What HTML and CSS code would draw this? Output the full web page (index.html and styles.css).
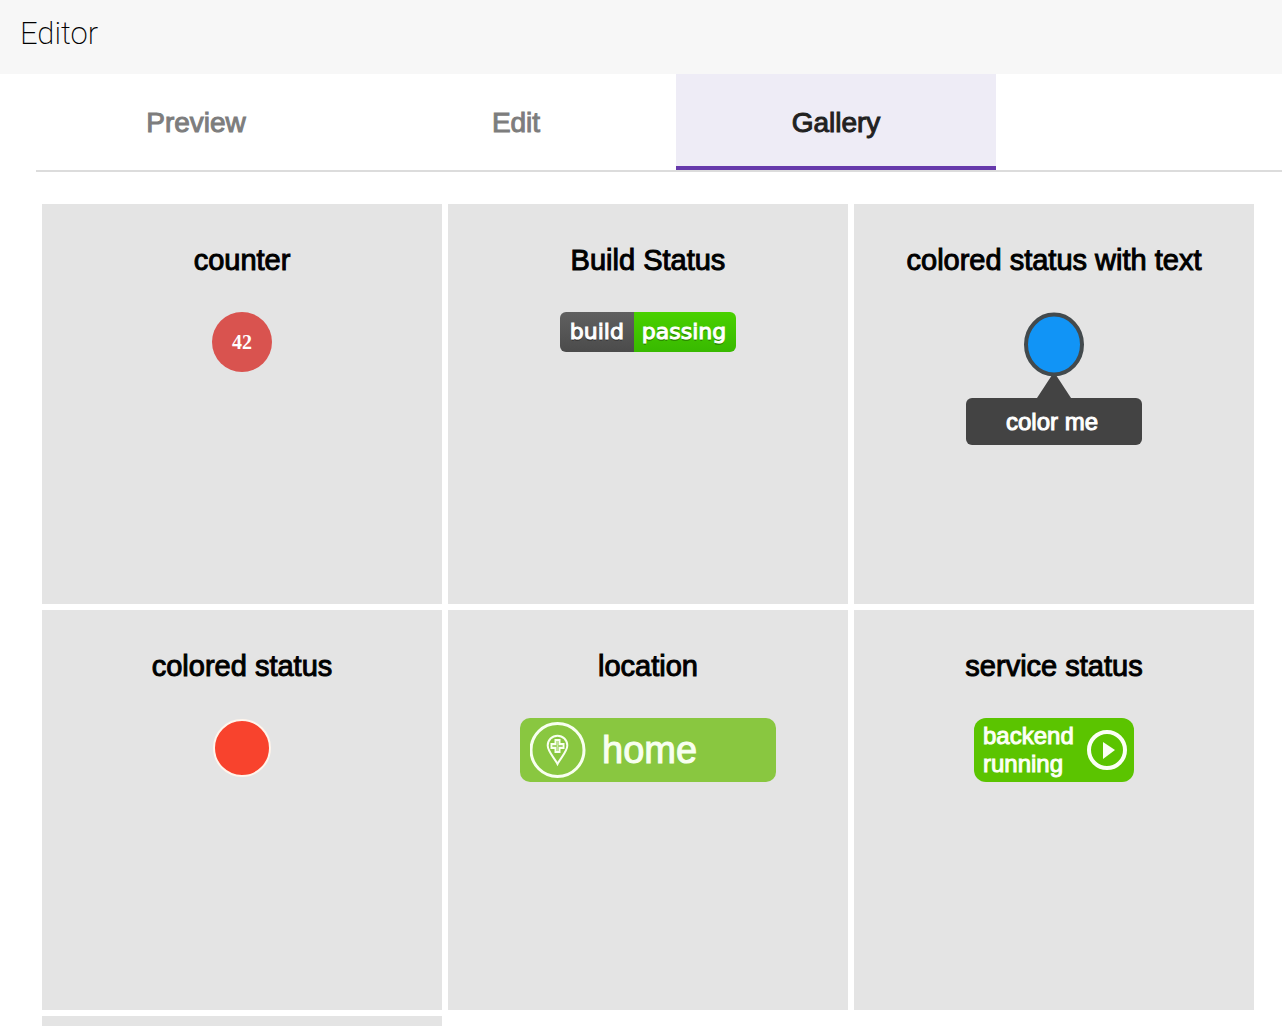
FILE: index.html
```
<!DOCTYPE html>
<html lang="en">
<head>
    <meta charset="UTF-8">
    <meta name="viewport" content="width=device-width, initial-scale=1.0">
    <title>Editor</title>
    <link rel="stylesheet" href="styles.css">
</head>
<body>
    <header class="toolbar">
        <h1>Editor</h1>
    </header>

    <div class="tabs" role="tablist">
        <button class="tab" type="button" role="tab" aria-selected="false">Preview</button>
        <button class="tab" type="button" role="tab" aria-selected="false">Edit</button>
        <button class="tab active" type="button" role="tab" aria-selected="true">Gallery</button>
    </div>

    <main class="gallery">
        <section class="card">
            <h2>counter</h2>
            <div class="counter">42</div>
        </section>

        <section class="card">
            <h2>Build Status</h2>
            <div class="build">
                <span class="build-label">build</span>
                <span class="build-value">passing</span>
            </div>
        </section>

        <section class="card">
            <h2>colored status with text</h2>
            <svg width="60" height="86" viewBox="0 0 60 86">
                <path d="M30 60L47 86H13Z" fill="#434343"/>
                <ellipse cx="30" cy="32.5" rx="28" ry="30" fill="#1194f6" stroke="#434a4d" stroke-width="4"/>
            </svg>
            <div class="bubble">color me</div>
        </section>

        <section class="card">
            <h2>colored status</h2>
            <svg width="60" height="60" viewBox="0 0 60 60">
                <circle cx="30" cy="30" r="28" fill="#f8432d" stroke="#fff5ec" stroke-width="2"/>
            </svg>
        </section>

        <section class="card">
            <h2>location</h2>
            <div class="location">
                <svg width="56" height="56" viewBox="0 0 56 56" fill="none" stroke="#f8fff0">
                    <circle cx="27.5" cy="28" r="26.5" stroke-width="3"/>
                    <path d="M27.5 42C24.5 36 17.7 29.5 17.7 23.5A9.8 9.8 0 0 1 37.3 23.5C37.3 29.5 30.5 36 27.5 42Z" stroke-width="2"/>
                    <path d="M25.5 18h4v4h4v4h-4v4h-4v-4h-4v-4h4z" stroke-width="2"/>
                    <path d="M27.5 19v10M23 24h9" stroke-width="1" stroke-opacity="0.5"/>
                </svg>
                <span>home</span>
            </div>
        </section>

        <section class="card">
            <h2>service status</h2>
            <div class="service">
                <span>backend<br>running</span>
                <svg width="40" height="40" viewBox="0 0 40 40">
                    <circle cx="20" cy="20" r="18" fill="none" stroke="#fbfff5" stroke-width="4"/>
                    <path d="M16 12L28 20L16 29Z" fill="#fbfff5"/>
                </svg>
            </div>
        </section>

        <section class="card"></section>
    </main>
</body>
</html>
```
FILE: styles.css
```
* {
    box-sizing: border-box;
}
body {
    margin: 0;
    height: 100vh;
    display: flex;
    flex-direction: column;
    overflow: hidden;
    background: #fff;
    color: #000;
    font-family: "Liberation Sans", Arial, sans-serif;
}
.toolbar {
    flex: none;
    padding: 14px 20px 20px;
    background: #f7f7f7;
}
.toolbar h1 {
    margin: 0;
    font-family: Roboto, sans-serif;
    font-size: 31px;
    line-height: 40px;
    font-weight: 200;
}
.tabs {
    flex: none;
    display: flex;
    margin-left: 36px;
    border-bottom: 2px solid #dcdcdc;
}
.tab {
    width: 320px;
    height: 96px;
    padding: 5px 0 0;
    border: none;
    border-bottom: 4px solid transparent;
    background: none;
    color: #7d7d7d;
    font-family: inherit;
    font-size: 28px;
    -webkit-text-stroke: 1px;
    cursor: pointer;
}
.tab.active {
    background: #eeecf6;
    border-bottom-color: #6639ab;
    color: #212121;
}
.gallery {
    flex: 1;
    min-height: 0;
    overflow: hidden;
    display: grid;
    grid-template-columns: repeat(auto-fill, 400px);
    grid-auto-rows: 400px;
    gap: 6px;
    padding: 32px 0 0 42px;
}
.card {
    display: flex;
    flex-direction: column;
    align-items: center;
    padding-top: 40px;
    background: #e4e4e4;
}
.card h2 {
    margin: 0 0 36px;
    font-size: 29px;
    line-height: 32px;
    font-weight: 400;
    -webkit-text-stroke: 1px;
}
.card svg {
    display: block;
    flex: none;
}
.counter {
    width: 60px;
    height: 60px;
    border-radius: 50%;
    background: #d9534f;
    color: #fff;
    font-family: "Liberation Serif", serif;
    font-size: 20px;
    font-weight: bold;
    line-height: 60px;
    text-align: center;
}
.build {
    display: flex;
    border-radius: 6px;
    overflow: hidden;
    color: #fff;
    font-family: "DejaVu Sans", Verdana, sans-serif;
    font-size: 22px;
    line-height: 40px;
    text-shadow: 0 2px 0 rgba(1, 1, 1, 0.3);
    -webkit-text-stroke: 1px;
}
.build-label {
    padding: 0 10px;
    background: linear-gradient(#606060, #4b4b4b);
}
.build-value {
    padding: 0 10px 0 8px;
    background: linear-gradient(#49d100, #38b900);
}
.bubble {
    width: 176px;
    padding-right: 4px;
    border-radius: 6px;
    background: #434343;
    color: #fff;
    font-size: 24px;
    line-height: 47px;
    text-align: center;
    -webkit-text-stroke: 1px;
}
.location {
    display: flex;
    align-items: center;
    gap: 16px;
    width: 256px;
    height: 64px;
    padding-left: 10px;
    border-radius: 10px;
    background: #89c740;
    color: #f8fff0;
    font-size: 38px;
    -webkit-text-stroke: 1px;
}
.service {
    display: flex;
    align-items: center;
    justify-content: space-between;
    width: 160px;
    height: 64px;
    padding: 0 7px 0 9px;
    border-radius: 12px;
    background: #5bc400;
    color: #fbfff5;
    font-size: 24px;
    line-height: 28px;
    -webkit-text-stroke: 1px;
}
```
